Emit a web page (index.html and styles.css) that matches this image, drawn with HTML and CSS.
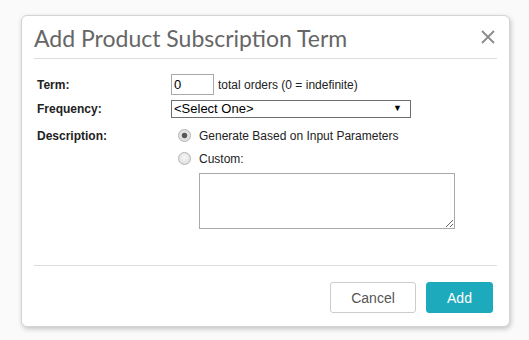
FILE: index.html
```html
<html>

<head>

	<title>Add Product Subscription Term</title>

	<link rel="stylesheet" href="styles.css">

</head>

<body>

	<div class="dialog">

		<div class="dialogHead">
			<h1 class="dialogTitle">Add Product Subscription Term</h1>
			<button class="closeBtn" title="Close">
				<svg width="14" height="14" viewBox="0 0 14 14">
					<path d="M1 1 L13 13 M13 1 L1 13" stroke="#8a8a8a" stroke-width="1.8" fill="none" />
				</svg>
			</button>
		</div>

		<div class="dialogBody">
			<div class="formRow">
				<label class="formLabel" for="termCount">Term:</label>
				<div class="formField">
					<input type="text" class="termInput" id="termCount" value="0" />
					<span class="hint">total orders (0 = indefinite)</span>
				</div>
			</div>
			<div class="formRow freqRow">
				<label class="formLabel" for="frequency">Frequency:</label>
				<div class="formField">
					<span class="selectWrap">
						<select id="frequency" class="freqSelect">
							<option>&lt;Select One&gt;</option>
						</select>
					</span>
				</div>
			</div>
			<div class="formRow descRow">
				<span class="formLabel descLabel">Description:</span>
				<div class="formField descField">
					<label class="radioLine"><input type="radio" name="desc" checked /> Generate Based on Input Parameters</label>
					<label class="radioLine"><input type="radio" name="desc" /> Custom:</label>
					<textarea class="customText"></textarea>
				</div>
			</div>
		</div>

		<div class="dialogFoot">
			<button class="btn btnCancel">Cancel</button>
			<button class="btn btnAdd">Add</button>
		</div>

	</div>

</body>

</html>
```

FILE: styles.css
```css
body {
	margin: 0;
	padding: 15px 19px 13px 21px;
	background-color: #fafafa;
	font-family: "Liberation Sans", Arial, sans-serif;
	font-size: 12px;
	color: #222222;
}
.dialog {
	width: 489px;
	height: 312px;
	box-sizing: border-box;
	background-color: #ffffff;
	border: 1px solid #d4d4d4;
	border-radius: 6px;
	box-shadow: 1px 2px 5px rgba(0, 0, 0, 0.22);
	display: flex;
	flex-direction: column;
}
.dialogHead {
	height: 42px;
	margin: 0 12px;
	border-bottom: 1px solid #dddddd;
	display: flex;
	align-items: center;
	justify-content: space-between;
}
.dialogTitle {
	margin: 0;
	font-family: Lato, "Open Sans", sans-serif;
	font-weight: 400;
	font-size: 23px;
	color: #666666;
	padding-top: 1px;
}
.closeBtn {
	border: 0;
	background: none;
	padding: 0;
	margin-right: 2px;
	width: 14px;
	height: 14px;
	display: flex;
}
.dialogBody {
	padding: 15px 0 0 15px;
}
.formRow {
	display: flex;
	align-items: center;
}
.formLabel {
	width: 134px;
	font-weight: bold;
	flex-shrink: 0;
}
.formField {
	display: flex;
	align-items: center;
}
.termInput {
	width: 43px;
	height: 21px;
	box-sizing: border-box;
	border: 1px solid #a9a9a9;
	padding: 0 2px;
	margin: 0;
	font-family: "Liberation Sans", Arial, sans-serif;
	font-size: 13px;
	color: #000000;
}
.hint {
	margin-left: 4px;
}
.freqRow {
	margin-top: 5px;
}
.selectWrap {
	position: relative;
	display: block;
}
.selectWrap::after {
	content: "\25BC";
	position: absolute;
	right: 9px;
	top: 3px;
	font-size: 9px;
	color: #000000;
	pointer-events: none;
}
.freqSelect {
	-webkit-appearance: none;
	appearance: none;
	width: 240px;
	height: 18px;
	box-sizing: border-box;
	border: 1px solid #6e6e6e;
	border-radius: 0;
	background-color: #ffffff;
	padding: 0 2px;
	margin: 0;
	font-family: "Liberation Sans", Arial, sans-serif;
	font-size: 13px;
	line-height: 16px;
	color: #000000;
}
.descRow {
	margin-top: 6px;
	align-items: flex-start;
}
.descLabel {
	line-height: 22px;
	padding-top: 1px;
}
.descField {
	flex-direction: column;
	align-items: flex-start;
}
.radioLine {
	height: 23px;
	display: flex;
	align-items: center;
	font-size: 12px;
}
.radioLine input {
	-webkit-appearance: none;
	appearance: none;
	width: 13px;
	height: 13px;
	margin: 0 8px 0 7px;
	border: 1px solid #b4b4b4;
	border-radius: 50%;
	background: radial-gradient(circle at 50% 40%, #f6f6f6 0%, #e2e2e2 70%, #d6d6d6 100%);
	box-sizing: border-box;
}
.radioLine input:checked {
	background: radial-gradient(circle, #555555 0, #5a5a5a 2.5px, #e6e6e6 3.2px, #d8d8d8 100%);
}
.customText {
	width: 256px;
	height: 56px;
	box-sizing: border-box;
	margin: 3px 0 0 28px;
	border: 1px solid #a9a9a9;
	font-family: "Liberation Sans", Arial, sans-serif;
	font-size: 12px;
}
.dialogFoot {
	margin: auto 12px 0 12px;
	padding: 16px 4px 13px 0;
	border-top: 1px solid #dddddd;
	display: flex;
	justify-content: flex-end;
	gap: 10px;
}
.btn {
	height: 31px;
	border-radius: 3px;
	font-family: "Liberation Sans", Arial, sans-serif;
	font-size: 14px;
	padding: 0;
}
.btnCancel {
	width: 86px;
	background-color: #ffffff;
	border: 1px solid #cccccc;
	color: #555555;
}
.btnAdd {
	width: 67px;
	background-color: #1eaabd;
	border: 1px solid #1eaabd;
	color: #ffffff;
}
```
